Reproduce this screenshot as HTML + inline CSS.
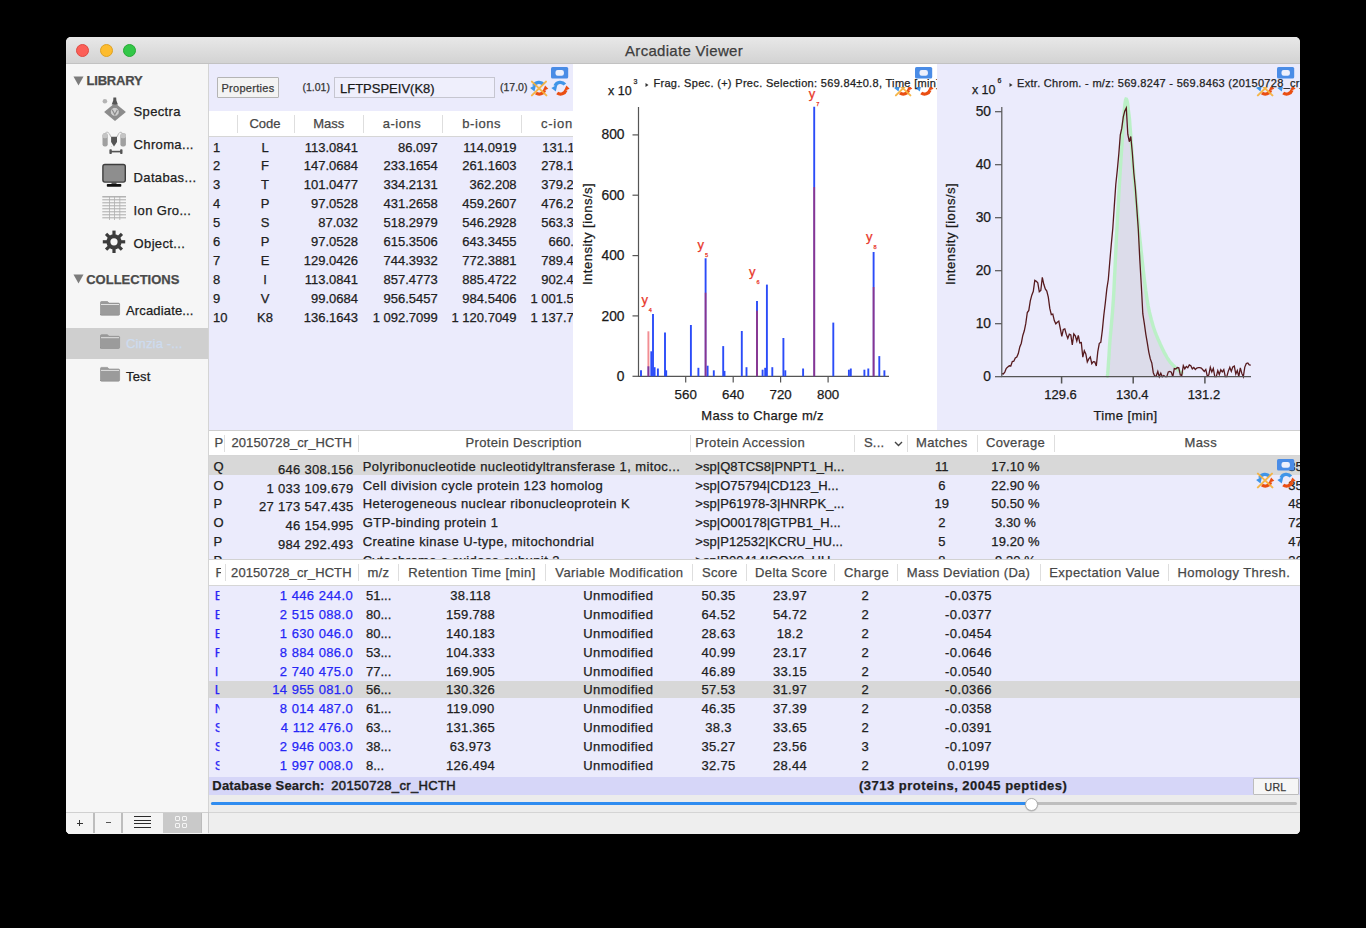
<!DOCTYPE html><html><head><meta charset="utf-8"><style>
*{margin:0;padding:0;box-sizing:border-box}
html,body{width:1366px;height:928px;overflow:hidden;background:#000}
body{position:relative;font-family:"Liberation Sans",sans-serif}
.t{position:absolute;white-space:nowrap;-webkit-text-stroke:0.25px currentColor}
.r{position:absolute}
.cl{position:absolute;left:0;top:0;width:1366px;height:928px}
svg{position:absolute}
</style></head><body>
<div class="r" style="left:66px;top:37px;width:1234px;height:796.6px;background:#ececec;border-radius:5px 5px 4.5px 4.5px;"></div>
<div class="r" style="left:66px;top:37px;width:1234px;height:27px;background:linear-gradient(#e8e8e8,#d3d3d3);border-radius:5px 5px 0 0;border-bottom:1px solid #c2c2c2;"></div>
<div class="r" style="left:76.0px;top:44px;width:13px;height:13px;border-radius:50%;background:#fc5f57;border:0.5px solid #de4a42"></div>
<div class="r" style="left:99.5px;top:44px;width:13px;height:13px;border-radius:50%;background:#fdbc2e;border:0.5px solid #dea123"></div>
<div class="r" style="left:123.0px;top:44px;width:13px;height:13px;border-radius:50%;background:#33c748;border:0.5px solid #27aa35"></div>
<div class="t" style="top:39.70px;font-size:15px;line-height:21px;color:#3d3d3d;letter-spacing:0.3px;left:484.00px;width:400px;text-align:center;">Arcadiate Viewer</div>
<div class="r" style="left:66px;top:64px;width:142px;height:748px;background:#f6f6f6;"></div>
<div class="r" style="left:208px;top:64px;width:1px;height:748px;background:#d4d4d4;"></div>
<svg style="left:73px;top:76px" width="11" height="10"><path d="M0.5 0.5 L10.5 0.5 L5.5 9.5 Z" fill="#7c7c7c"/></svg>
<div class="t" style="top:72.30px;font-size:13px;line-height:18px;color:#4a4a4a;font-weight:700;letter-spacing:-0.2px;left:86.50px;">LIBRARY</div>
<div class="t" style="top:103.00px;font-size:13px;line-height:18px;color:#202020;letter-spacing:0.35px;left:133.60px;">Spectra</div>
<div class="t" style="top:136.00px;font-size:13px;line-height:18px;color:#202020;letter-spacing:0.35px;left:133.60px;">Chroma...</div>
<div class="t" style="top:169.00px;font-size:13px;line-height:18px;color:#202020;letter-spacing:0.35px;left:133.60px;">Databas...</div>
<div class="t" style="top:202.00px;font-size:13px;line-height:18px;color:#202020;letter-spacing:0.35px;left:133.60px;">Ion Gro...</div>
<div class="t" style="top:235.00px;font-size:13px;line-height:18px;color:#202020;letter-spacing:0.35px;left:133.60px;">Object...</div>
<svg style="left:73px;top:274px" width="11" height="10"><path d="M0.5 0.5 L10.5 0.5 L5.5 9.5 Z" fill="#7c7c7c"/></svg>
<div class="t" style="top:270.50px;font-size:13px;line-height:18px;color:#4a4a4a;font-weight:700;left:86.20px;">COLLECTIONS</div>
<div class="r" style="left:66px;top:327.9px;width:142px;height:31.6px;background:#cfcfcf;"></div>
<div class="t" style="top:301.50px;font-size:13px;line-height:18px;color:#202020;letter-spacing:0.15px;left:126.00px;">Arcadiate...</div>
<div class="t" style="top:334.50px;font-size:13px;line-height:18px;color:#cddcf0;letter-spacing:0.15px;left:126.00px;">Cinzia -...</div>
<div class="t" style="top:367.50px;font-size:13px;line-height:18px;color:#202020;letter-spacing:0.15px;left:126.00px;">Test</div>
<svg style="left:0;top:0" width="1366" height="928"><circle cx="104.9" cy="101.2" r="2.3" fill="#b4b4b4"/><path d="M115 103 L125.9 112 L115 120.9 L104.1 112 Z" fill="#8c8c8c"/><circle cx="114.8" cy="111.8" r="4.4" fill="#cfcfcf" stroke="#7a7a7a" stroke-width="0.6"/><path d="M112.2 109.8 L114.8 114.5 L117.4 109.8" stroke="#8c8c8c" stroke-width="1.2" fill="none"/><path d="M113.4 97.4 H116.2 L116.4 100.5 L117.9 104.6 H111.7 L113.2 100.5 Z" fill="#555"/><path d="M104.5 134 Q108 129 111 137 M123 134 Q120 129 117 137" stroke="#aaa" stroke-width="0.8" fill="none"/><rect x="102.5" y="133.3" width="5.2" height="13.1" rx="2.2" fill="#a0a0a0"/><rect x="102.5" y="133.3" width="5.2" height="5" rx="2" fill="#c4c4c4"/><rect x="120.4" y="133.3" width="5.5" height="13.1" rx="2.2" fill="#a0a0a0"/><rect x="120.4" y="133.3" width="5.5" height="5" rx="2" fill="#c4c4c4"/><path d="M111.1 136.8 H117 V142 L114 146.4 L111.1 142 Z" fill="#555"/><path d="M111.5 147 V146.6" stroke="#888" stroke-width="0.6"/><rect x="109.4" y="149.2" width="2.4" height="4.8" rx="0.8" fill="#555"/><rect x="120.1" y="149.2" width="2.4" height="4.8" rx="0.8" fill="#555"/><rect x="111" y="150.8" width="10" height="1.6" fill="#555"/><rect x="102.9" y="164.5" width="22.4" height="17.6" rx="2" fill="#8e8e8e" stroke="#3e3e3e" stroke-width="1.4"/><rect x="111.5" y="182" width="5" height="2.2" fill="#555"/><rect x="106.8" y="184" width="14.5" height="2.8" rx="0.8" fill="#111"/><path d="M102.3 196.8 H126" stroke="#9a9a9a" stroke-width="1.2" opacity="0.9"/><path d="M102.3 199.8 H126" stroke="#9a9a9a" stroke-width="0.9" opacity="0.9"/><path d="M102.3 202.8 H126" stroke="#9a9a9a" stroke-width="0.9" opacity="0.9"/><path d="M102.3 205.8 H126" stroke="#9a9a9a" stroke-width="0.9" opacity="0.9"/><path d="M102.3 208.8 H126" stroke="#9a9a9a" stroke-width="0.9" opacity="0.9"/><path d="M102.3 211.8 H126" stroke="#9a9a9a" stroke-width="0.9" opacity="0.9"/><path d="M102.3 214.8 H126" stroke="#9a9a9a" stroke-width="0.9" opacity="0.9"/><path d="M102.3 217.8 H126" stroke="#9a9a9a" stroke-width="0.9" opacity="0.9"/><path d="M109.5 196.2 V220" stroke="#b0b0b0" stroke-width="0.8"/><path d="M114.5 196.2 V220" stroke="#b0b0b0" stroke-width="0.8"/><path d="M119.8 196.2 V220" stroke="#b0b0b0" stroke-width="0.8"/><path d="M120.00 241.80 L125.20 241.80" stroke="#3c3c3c" stroke-width="3.2" stroke-linecap="butt"/><path d="M118.24 246.04 L121.92 249.72" stroke="#3c3c3c" stroke-width="3.2" stroke-linecap="butt"/><path d="M114.00 247.80 L114.00 253.00" stroke="#3c3c3c" stroke-width="3.2" stroke-linecap="butt"/><path d="M109.76 246.04 L106.08 249.72" stroke="#3c3c3c" stroke-width="3.2" stroke-linecap="butt"/><path d="M108.00 241.80 L102.80 241.80" stroke="#3c3c3c" stroke-width="3.2" stroke-linecap="butt"/><path d="M109.76 237.56 L106.08 233.88" stroke="#3c3c3c" stroke-width="3.2" stroke-linecap="butt"/><path d="M114.00 235.80 L114.00 230.60" stroke="#3c3c3c" stroke-width="3.2" stroke-linecap="butt"/><path d="M118.24 237.56 L121.92 233.88" stroke="#3c3c3c" stroke-width="3.2" stroke-linecap="butt"/><circle cx="114.0" cy="241.8" r="5.6" fill="none" stroke="#3c3c3c" stroke-width="4"/><path d="M100.5 315.1 V302.5 Q100.5 301.5 101.5 301.5 H107.5 L109 303.1 H118.5 Q119.6 303.1 119.6 304.1 V314.1 Q119.6 315.3 118.5 315.3 H101.5 Q100.5 315.3 100.5 314.3 Z" fill="#9b9b9b" stroke="#8a8a8a" stroke-width="0.6"/><path d="M101 304.5 H119" stroke="#e2e2e2" stroke-width="1"/><path d="M100.5 348.3 V335.7 Q100.5 334.7 101.5 334.7 H107.5 L109 336.3 H118.5 Q119.6 336.3 119.6 337.3 V347.3 Q119.6 348.5 118.5 348.5 H101.5 Q100.5 348.5 100.5 347.5 Z" fill="#9b9b9b" stroke="#8a8a8a" stroke-width="0.6"/><path d="M101 337.7 H119" stroke="#e2e2e2" stroke-width="1"/><path d="M100.5 381.0 V368.4 Q100.5 367.4 101.5 367.4 H107.5 L109 369.0 H118.5 Q119.6 369.0 119.6 370.0 V380.0 Q119.6 381.2 118.5 381.2 H101.5 Q100.5 381.2 100.5 380.2 Z" fill="#9b9b9b" stroke="#8a8a8a" stroke-width="0.6"/><path d="M101 370.4 H119" stroke="#e2e2e2" stroke-width="1"/></svg>
<div class="r" style="left:66px;top:811.5px;width:1234px;height:22.1px;background:#eeeeee;border-top:1.2px solid #d4d4d4;border-radius:0 0 4.5px 4.5px;"></div>
<div class="r" style="left:66px;top:811.5px;width:142px;height:22.1px;background:#f4f4f4;border-top:1.2px solid #d0d0d0;border-radius:0 0 0 4.5px;"></div>
<div class="r" style="left:208px;top:812px;width:1px;height:21px;background:#c9c9c9;"></div>
<div class="r" style="left:93.4px;top:813px;width:1.8px;height:20px;background:#bdbdbd;"></div>
<div class="r" style="left:121.4px;top:813px;width:1.8px;height:20px;background:#bdbdbd;"></div>
<div class="r" style="left:162.5px;top:813px;width:38px;height:20px;background:#c9c9c9;"></div>
<div class="r" style="left:200.5px;top:813px;width:1px;height:20px;background:#bcbcbc;"></div>
<div class="r" style="left:76.6px;top:822.6px;width:6px;height:1.3px;background:#333;"></div>
<div class="r" style="left:79px;top:820.1px;width:1.3px;height:6.2px;background:#333;"></div>
<div class="r" style="left:105.8px;top:822.3px;width:5px;height:1.2px;background:#555;"></div>
<div class="r" style="left:133.8px;top:815.8px;width:17px;height:1.3px;background:#2a2a2a;"></div>
<div class="r" style="left:133.8px;top:819.5px;width:17px;height:1.3px;background:#2a2a2a;"></div>
<div class="r" style="left:133.8px;top:823.1px;width:17px;height:1.3px;background:#2a2a2a;"></div>
<div class="r" style="left:133.8px;top:826.8px;width:17px;height:1.3px;background:#2a2a2a;"></div>
<div class="r" style="left:175.4px;top:816.2px;width:4.9px;height:4.9px;border:1px solid #f4f4f4;border-radius:1px"></div>
<div class="r" style="left:175.4px;top:823.2px;width:4.9px;height:4.9px;border:1px solid #f4f4f4;border-radius:1px"></div>
<div class="r" style="left:182.4px;top:816.2px;width:4.9px;height:4.9px;border:1px solid #f4f4f4;border-radius:1px"></div>
<div class="r" style="left:182.4px;top:823.2px;width:4.9px;height:4.9px;border:1px solid #f4f4f4;border-radius:1px"></div>
<div class="r" style="left:209px;top:64px;width:364px;height:366px;background:#ebebfc;"></div>
<div class="r" style="left:217px;top:77px;width:62px;height:21px;background:#f3f3f3;border:1px solid #b4b4b4;border-radius:1px"></div>
<div class="t" style="top:81.09px;font-size:11px;line-height:15px;color:#3a3a3a;letter-spacing:0.3px;left:217.00px;width:62px;text-align:center;">Properties</div>
<div class="t" style="top:80.46px;font-size:10.5px;line-height:15px;color:#333;left:302.50px;">(1.01)</div>
<div class="r" style="left:334px;top:77px;width:161px;height:21px;background:#efeffc;border:1px solid #c6c6d0;"></div>
<div class="t" style="top:79.50px;font-size:13px;line-height:18px;color:#1a1a1a;left:340.00px;">LFTPSPEIV(K8)</div>
<div class="t" style="top:80.46px;font-size:10.5px;line-height:15px;color:#333;left:500.00px;">(17.0)</div>
<svg style="left:528.4px;top:66.7px" width="44" height="32" viewBox="-23 0 44 32"><rect x="0" y="0" width="17.2" height="11.6" rx="1.6" fill="#4a8ce6"/><rect x="4.5" y="2.9" width="8.4" height="5.8" rx="2.2" fill="#eef0fc"/><g transform="translate(-21.3 0)"><path d="M13.9 17.6 A5.8 5.8 0 0 0 4.0 18.8" stroke="#3f95e8" stroke-width="3.3" fill="none"/><path d="M0.4 21.0 L6.4 17.6 L4.8 24.6 Z" fill="#3f95e8"/><path d="M6.2 26.0 A5.8 5.8 0 0 0 15.0 23.2" stroke="#ea4e12" stroke-width="3.3" fill="none"/><path d="M18.6 21.8 L15.4 18.6 L12.8 24.2 Z" fill="#ea4e12"/><path d="M2.2 14.6 L16.7 28.4 M16.3 14.6 L2.2 28.4" stroke="#f6b23c" stroke-width="2" stroke-linecap="round" opacity="0.92"/></g><g transform="translate(0 0)"><path d="M13.9 17.6 A5.8 5.8 0 0 0 4.0 18.8" stroke="#3f95e8" stroke-width="3.3" fill="none"/><path d="M0.4 21.0 L6.4 17.6 L4.8 24.6 Z" fill="#3f95e8"/><path d="M6.2 26.0 A5.8 5.8 0 0 0 15.0 23.2" stroke="#ea4e12" stroke-width="3.3" fill="none"/><path d="M18.6 21.8 L15.4 18.6 L12.8 24.2 Z" fill="#ea4e12"/></g></svg>
<div class="r" style="left:209px;top:111.3px;width:364px;height:25.9px;background:#fff;border-bottom:1px solid #d6d6d6;"></div>
<div class="r" style="left:236.6px;top:115px;width:1px;height:18px;background:#dedede;"></div>
<div class="r" style="left:293.5px;top:115px;width:1px;height:18px;background:#dedede;"></div>
<div class="r" style="left:362.5px;top:115px;width:1px;height:18px;background:#dedede;"></div>
<div class="r" style="left:441.6px;top:115px;width:1px;height:18px;background:#dedede;"></div>
<div class="r" style="left:520.6px;top:115px;width:1px;height:18px;background:#dedede;"></div>
<div class="t" style="top:114.80px;font-size:13px;line-height:18px;color:#474747;left:235.00px;width:60px;text-align:center;">Code</div>
<div class="t" style="top:114.80px;font-size:13px;line-height:18px;color:#474747;left:298.80px;width:60px;text-align:center;">Mass</div>
<div class="t" style="top:114.80px;font-size:13px;line-height:18px;color:#474747;letter-spacing:0.55px;left:367.00px;width:70px;text-align:center;">a-ions</div>
<div class="t" style="top:114.80px;font-size:13px;line-height:18px;color:#474747;letter-spacing:0.55px;left:446.70px;width:70px;text-align:center;">b-ions</div>
<div class="cl" style="clip-path:inset(111px 793px 791px 209px)">
<div class="t" style="top:114.80px;font-size:13px;line-height:18px;color:#474747;letter-spacing:0.75px;left:541.00px;">c-ions</div>
</div>
<div class="cl" style="clip-path:inset(137px 793px 498px 209px)">
<div class="t" style="top:138.50px;font-size:13px;line-height:18px;color:#202020;left:213.00px;">1</div>
<div class="t" style="top:138.50px;font-size:13px;line-height:18px;color:#202020;left:245.00px;width:40px;text-align:center;">L</div>
<div class="t" style="top:138.50px;font-size:13px;line-height:18px;color:#202020;left:258.00px;width:100px;text-align:right;">113.0841</div>
<div class="t" style="top:138.50px;font-size:13px;line-height:18px;color:#202020;left:337.80px;width:100px;text-align:right;">86.097</div>
<div class="t" style="top:138.50px;font-size:13px;line-height:18px;color:#202020;left:416.60px;width:100px;text-align:right;">114.0919</div>
<div class="t" style="top:138.50px;font-size:13px;line-height:18px;color:#202020;left:495.50px;width:100px;text-align:right;">131.1184</div>
<div class="t" style="top:157.40px;font-size:13px;line-height:18px;color:#202020;left:213.00px;">2</div>
<div class="t" style="top:157.40px;font-size:13px;line-height:18px;color:#202020;left:245.00px;width:40px;text-align:center;">F</div>
<div class="t" style="top:157.40px;font-size:13px;line-height:18px;color:#202020;left:258.00px;width:100px;text-align:right;">147.0684</div>
<div class="t" style="top:157.40px;font-size:13px;line-height:18px;color:#202020;left:337.80px;width:100px;text-align:right;">233.1654</div>
<div class="t" style="top:157.40px;font-size:13px;line-height:18px;color:#202020;left:416.60px;width:100px;text-align:right;">261.1603</div>
<div class="t" style="top:157.40px;font-size:13px;line-height:18px;color:#202020;left:495.50px;width:100px;text-align:right;">278.1868</div>
<div class="t" style="top:176.30px;font-size:13px;line-height:18px;color:#202020;left:213.00px;">3</div>
<div class="t" style="top:176.30px;font-size:13px;line-height:18px;color:#202020;left:245.00px;width:40px;text-align:center;">T</div>
<div class="t" style="top:176.30px;font-size:13px;line-height:18px;color:#202020;left:258.00px;width:100px;text-align:right;">101.0477</div>
<div class="t" style="top:176.30px;font-size:13px;line-height:18px;color:#202020;left:337.80px;width:100px;text-align:right;">334.2131</div>
<div class="t" style="top:176.30px;font-size:13px;line-height:18px;color:#202020;left:416.60px;width:100px;text-align:right;">362.208</div>
<div class="t" style="top:176.30px;font-size:13px;line-height:18px;color:#202020;left:495.50px;width:100px;text-align:right;">379.2345</div>
<div class="t" style="top:195.20px;font-size:13px;line-height:18px;color:#202020;left:213.00px;">4</div>
<div class="t" style="top:195.20px;font-size:13px;line-height:18px;color:#202020;left:245.00px;width:40px;text-align:center;">P</div>
<div class="t" style="top:195.20px;font-size:13px;line-height:18px;color:#202020;left:258.00px;width:100px;text-align:right;">97.0528</div>
<div class="t" style="top:195.20px;font-size:13px;line-height:18px;color:#202020;left:337.80px;width:100px;text-align:right;">431.2658</div>
<div class="t" style="top:195.20px;font-size:13px;line-height:18px;color:#202020;left:416.60px;width:100px;text-align:right;">459.2607</div>
<div class="t" style="top:195.20px;font-size:13px;line-height:18px;color:#202020;left:495.50px;width:100px;text-align:right;">476.2872</div>
<div class="t" style="top:214.10px;font-size:13px;line-height:18px;color:#202020;left:213.00px;">5</div>
<div class="t" style="top:214.10px;font-size:13px;line-height:18px;color:#202020;left:245.00px;width:40px;text-align:center;">S</div>
<div class="t" style="top:214.10px;font-size:13px;line-height:18px;color:#202020;left:258.00px;width:100px;text-align:right;">87.032</div>
<div class="t" style="top:214.10px;font-size:13px;line-height:18px;color:#202020;left:337.80px;width:100px;text-align:right;">518.2979</div>
<div class="t" style="top:214.10px;font-size:13px;line-height:18px;color:#202020;left:416.60px;width:100px;text-align:right;">546.2928</div>
<div class="t" style="top:214.10px;font-size:13px;line-height:18px;color:#202020;left:495.50px;width:100px;text-align:right;">563.3193</div>
<div class="t" style="top:233.00px;font-size:13px;line-height:18px;color:#202020;left:213.00px;">6</div>
<div class="t" style="top:233.00px;font-size:13px;line-height:18px;color:#202020;left:245.00px;width:40px;text-align:center;">P</div>
<div class="t" style="top:233.00px;font-size:13px;line-height:18px;color:#202020;left:258.00px;width:100px;text-align:right;">97.0528</div>
<div class="t" style="top:233.00px;font-size:13px;line-height:18px;color:#202020;left:337.80px;width:100px;text-align:right;">615.3506</div>
<div class="t" style="top:233.00px;font-size:13px;line-height:18px;color:#202020;left:416.60px;width:100px;text-align:right;">643.3455</div>
<div class="t" style="top:233.00px;font-size:13px;line-height:18px;color:#202020;left:495.50px;width:100px;text-align:right;">660.372</div>
<div class="t" style="top:251.90px;font-size:13px;line-height:18px;color:#202020;left:213.00px;">7</div>
<div class="t" style="top:251.90px;font-size:13px;line-height:18px;color:#202020;left:245.00px;width:40px;text-align:center;">E</div>
<div class="t" style="top:251.90px;font-size:13px;line-height:18px;color:#202020;left:258.00px;width:100px;text-align:right;">129.0426</div>
<div class="t" style="top:251.90px;font-size:13px;line-height:18px;color:#202020;left:337.80px;width:100px;text-align:right;">744.3932</div>
<div class="t" style="top:251.90px;font-size:13px;line-height:18px;color:#202020;left:416.60px;width:100px;text-align:right;">772.3881</div>
<div class="t" style="top:251.90px;font-size:13px;line-height:18px;color:#202020;left:495.50px;width:100px;text-align:right;">789.4146</div>
<div class="t" style="top:270.80px;font-size:13px;line-height:18px;color:#202020;left:213.00px;">8</div>
<div class="t" style="top:270.80px;font-size:13px;line-height:18px;color:#202020;left:245.00px;width:40px;text-align:center;">I</div>
<div class="t" style="top:270.80px;font-size:13px;line-height:18px;color:#202020;left:258.00px;width:100px;text-align:right;">113.0841</div>
<div class="t" style="top:270.80px;font-size:13px;line-height:18px;color:#202020;left:337.80px;width:100px;text-align:right;">857.4773</div>
<div class="t" style="top:270.80px;font-size:13px;line-height:18px;color:#202020;left:416.60px;width:100px;text-align:right;">885.4722</div>
<div class="t" style="top:270.80px;font-size:13px;line-height:18px;color:#202020;left:495.50px;width:100px;text-align:right;">902.4987</div>
<div class="t" style="top:289.70px;font-size:13px;line-height:18px;color:#202020;left:213.00px;">9</div>
<div class="t" style="top:289.70px;font-size:13px;line-height:18px;color:#202020;left:245.00px;width:40px;text-align:center;">V</div>
<div class="t" style="top:289.70px;font-size:13px;line-height:18px;color:#202020;left:258.00px;width:100px;text-align:right;">99.0684</div>
<div class="t" style="top:289.70px;font-size:13px;line-height:18px;color:#202020;left:337.80px;width:100px;text-align:right;">956.5457</div>
<div class="t" style="top:289.70px;font-size:13px;line-height:18px;color:#202020;left:416.60px;width:100px;text-align:right;">984.5406</div>
<div class="t" style="top:289.70px;font-size:13px;line-height:18px;color:#202020;left:495.50px;width:100px;text-align:right;">1 001.5671</div>
<div class="t" style="top:308.60px;font-size:13px;line-height:18px;color:#202020;left:213.00px;">10</div>
<div class="t" style="top:308.60px;font-size:13px;line-height:18px;color:#202020;left:245.00px;width:40px;text-align:center;">K8</div>
<div class="t" style="top:308.60px;font-size:13px;line-height:18px;color:#202020;left:258.00px;width:100px;text-align:right;">136.1643</div>
<div class="t" style="top:308.60px;font-size:13px;line-height:18px;color:#202020;left:337.80px;width:100px;text-align:right;">1 092.7099</div>
<div class="t" style="top:308.60px;font-size:13px;line-height:18px;color:#202020;left:416.60px;width:100px;text-align:right;">1 120.7049</div>
<div class="t" style="top:308.60px;font-size:13px;line-height:18px;color:#202020;left:495.50px;width:100px;text-align:right;">1 137.7314</div>
</div>
<div class="r" style="left:573px;top:64px;width:364px;height:366px;background:#fff;"></div>
<div class="cl" style="clip-path:inset(64px 429px 498px 573px)">
<div class="t" style="top:81.77px;font-size:12.5px;line-height:18px;color:#1a1a1a;left:608.00px;">x 10</div>
<div class="t" style="top:76.57px;font-size:7px;line-height:10px;color:#1a1a1a;left:633.40px;">3</div>
<svg style="left:0;top:0" width="1366" height="928"><path d="M638.5 107 V376.3 H889" stroke="#555" stroke-width="1.2" fill="none"/><path d="M632.5 376.3 H638.5" stroke="#555" stroke-width="1.2"/><path d="M632.5 315.9 H638.5" stroke="#555" stroke-width="1.2"/><path d="M632.5 255.6 H638.5" stroke="#555" stroke-width="1.2"/><path d="M632.5 195.2 H638.5" stroke="#555" stroke-width="1.2"/><path d="M632.5 134.9 H638.5" stroke="#555" stroke-width="1.2"/><path d="M685.7 376.3 V382.5" stroke="#555" stroke-width="1.2"/><path d="M733.2 376.3 V382.5" stroke="#555" stroke-width="1.2"/><path d="M780.6 376.3 V382.5" stroke="#555" stroke-width="1.2"/><path d="M828.1 376.3 V382.5" stroke="#555" stroke-width="1.2"/><path d="M641.0 376.3 V370.3" stroke="#2b4cf8" stroke-width="1.9"/><path d="M648.4 376.3 V366.3" stroke="#2b4cf8" stroke-width="1.9"/><path d="M651.3 376.3 V351.3" stroke="#2b4cf8" stroke-width="1.9"/><path d="M653.0 376.3 V314.1" stroke="#2b4cf8" stroke-width="1.9"/><path d="M654.6 376.3 V367.2" stroke="#2b4cf8" stroke-width="1.9"/><path d="M657.9 376.3 V368.5" stroke="#2b4cf8" stroke-width="1.9"/><path d="M665.0 376.3 V332.5" stroke="#2b4cf8" stroke-width="1.9"/><path d="M666.2 376.3 V370.3" stroke="#2b4cf8" stroke-width="1.9"/><path d="M690.9 376.3 V325.0" stroke="#2b4cf8" stroke-width="1.9"/><path d="M698.4 376.3 V367.8" stroke="#2b4cf8" stroke-width="1.9"/><path d="M705.6 376.3 V258.3" stroke="#2b4cf8" stroke-width="1.9"/><path d="M707.6 376.3 V365.7" stroke="#2b4cf8" stroke-width="1.9"/><path d="M713.8 376.3 V370.3" stroke="#2b4cf8" stroke-width="1.9"/><path d="M723.2 376.3 V346.1" stroke="#2b4cf8" stroke-width="1.9"/><path d="M724.5 376.3 V370.9" stroke="#2b4cf8" stroke-width="1.9"/><path d="M741.8 376.3 V331.0" stroke="#2b4cf8" stroke-width="1.9"/><path d="M746.5 376.3 V367.2" stroke="#2b4cf8" stroke-width="1.9"/><path d="M757.0 376.3 V300.9" stroke="#2b4cf8" stroke-width="1.9"/><path d="M762.6 376.3 V369.7" stroke="#2b4cf8" stroke-width="1.9"/><path d="M765.2 376.3 V367.8" stroke="#2b4cf8" stroke-width="1.9"/><path d="M766.9 376.3 V284.6" stroke="#2b4cf8" stroke-width="1.9"/><path d="M772.3 376.3 V367.2" stroke="#2b4cf8" stroke-width="1.9"/><path d="M783.4 376.3 V338.0" stroke="#2b4cf8" stroke-width="1.9"/><path d="M785.3 376.3 V370.3" stroke="#2b4cf8" stroke-width="1.9"/><path d="M803.1 376.3 V368.5" stroke="#2b4cf8" stroke-width="1.9"/><path d="M814.2 376.3 V106.8" stroke="#2b4cf8" stroke-width="1.9"/><path d="M833.3 376.3 V322.6" stroke="#2b4cf8" stroke-width="1.9"/><path d="M848.9 376.3 V369.7" stroke="#2b4cf8" stroke-width="1.9"/><path d="M850.8 376.3 V368.5" stroke="#2b4cf8" stroke-width="1.9"/><path d="M864.4 376.3 V369.7" stroke="#2b4cf8" stroke-width="1.9"/><path d="M868.3 376.3 V368.5" stroke="#2b4cf8" stroke-width="1.9"/><path d="M873.6 376.3 V252.0" stroke="#2b4cf8" stroke-width="1.9"/><path d="M879.3 376.3 V356.1" stroke="#2b4cf8" stroke-width="1.9"/><path d="M884.4 376.3 V370.3" stroke="#2b4cf8" stroke-width="1.9"/><path d="M648.4 376.3 V331.3" stroke="rgba(230,30,40,0.5)" stroke-width="1.9"/><path d="M705.6 376.3 V292.7" stroke="rgba(230,30,40,0.5)" stroke-width="1.9"/><path d="M757.0 376.3 V310.8" stroke="rgba(230,30,40,0.5)" stroke-width="1.9"/><path d="M814.2 376.3 V187.1" stroke="rgba(230,30,40,0.5)" stroke-width="1.9"/><path d="M873.6 376.3 V287.0" stroke="rgba(230,30,40,0.5)" stroke-width="1.9"/></svg>
<div class="t" style="top:290.80px;font-size:13px;line-height:18px;color:#e8382a;left:641.40px;">y</div>
<div class="t" style="top:305.66px;font-size:5.6px;line-height:8px;color:#e8382a;left:648.80px;">4</div>
<div class="t" style="top:235.80px;font-size:13px;line-height:18px;color:#e8382a;left:697.60px;">y</div>
<div class="t" style="top:250.66px;font-size:5.6px;line-height:8px;color:#e8382a;left:705.00px;">5</div>
<div class="t" style="top:262.80px;font-size:13px;line-height:18px;color:#e8382a;left:749.00px;">y</div>
<div class="t" style="top:277.66px;font-size:5.6px;line-height:8px;color:#e8382a;left:756.40px;">6</div>
<div class="t" style="top:84.90px;font-size:13px;line-height:18px;color:#e8382a;left:808.80px;">y</div>
<div class="t" style="top:99.76px;font-size:5.6px;line-height:8px;color:#e8382a;left:816.20px;">7</div>
<div class="t" style="top:227.90px;font-size:13px;line-height:18px;color:#e8382a;left:866.00px;">y</div>
<div class="t" style="top:242.76px;font-size:5.6px;line-height:8px;color:#e8382a;left:873.40px;">8</div>
<div class="t" style="top:366.92px;font-size:13.8px;line-height:19px;color:#1a1a1a;left:564.50px;width:60px;text-align:right;">0</div>
<div class="t" style="top:306.56px;font-size:13.8px;line-height:19px;color:#1a1a1a;left:564.50px;width:60px;text-align:right;">200</div>
<div class="t" style="top:246.20px;font-size:13.8px;line-height:19px;color:#1a1a1a;left:564.50px;width:60px;text-align:right;">400</div>
<div class="t" style="top:185.84px;font-size:13.8px;line-height:19px;color:#1a1a1a;left:564.50px;width:60px;text-align:right;">600</div>
<div class="t" style="top:125.48px;font-size:13.8px;line-height:19px;color:#1a1a1a;left:564.50px;width:60px;text-align:right;">800</div>
<div class="t" style="top:384.89px;font-size:13.3px;line-height:19px;color:#1a1a1a;left:655.70px;width:60px;text-align:center;">560</div>
<div class="t" style="top:384.89px;font-size:13.3px;line-height:19px;color:#1a1a1a;left:703.17px;width:60px;text-align:center;">640</div>
<div class="t" style="top:384.89px;font-size:13.3px;line-height:19px;color:#1a1a1a;left:750.64px;width:60px;text-align:center;">720</div>
<div class="t" style="top:384.89px;font-size:13.3px;line-height:19px;color:#1a1a1a;left:798.11px;width:60px;text-align:center;">800</div>
<div class="t" style="top:406.70px;font-size:13px;line-height:18px;color:#1a1a1a;letter-spacing:0.35px;left:662.60px;width:200px;text-align:center;">Mass to Charge m/z</div>
<div class="t" style="left:538px;top:226px;width:100px;height:18px;line-height:18px;font-size:13px;color:#1a1a1a;text-align:center;transform:rotate(-90deg);letter-spacing:0.5px">Intensity [ions/s]</div>
<svg style="left:891.7px;top:66.8px" width="44" height="32" viewBox="-23 0 44 32"><rect x="0" y="0" width="17.2" height="11.6" rx="1.6" fill="#4a8ce6"/><rect x="4.5" y="2.9" width="8.4" height="5.8" rx="2.2" fill="#eef0fc"/><g transform="translate(-21.3 0)"><path d="M13.9 17.6 A5.8 5.8 0 0 0 4.0 18.8" stroke="#3f95e8" stroke-width="3.3" fill="none"/><path d="M0.4 21.0 L6.4 17.6 L4.8 24.6 Z" fill="#3f95e8"/><path d="M6.2 26.0 A5.8 5.8 0 0 0 15.0 23.2" stroke="#ea4e12" stroke-width="3.3" fill="none"/><path d="M18.6 21.8 L15.4 18.6 L12.8 24.2 Z" fill="#ea4e12"/><path d="M2.2 14.6 L16.7 28.4 M16.3 14.6 L2.2 28.4" stroke="#f6b23c" stroke-width="2" stroke-linecap="round" opacity="0.92"/></g><g transform="translate(0 0)"><path d="M13.9 17.6 A5.8 5.8 0 0 0 4.0 18.8" stroke="#3f95e8" stroke-width="3.3" fill="none"/><path d="M0.4 21.0 L6.4 17.6 L4.8 24.6 Z" fill="#3f95e8"/><path d="M6.2 26.0 A5.8 5.8 0 0 0 15.0 23.2" stroke="#ea4e12" stroke-width="3.3" fill="none"/><path d="M18.6 21.8 L15.4 18.6 L12.8 24.2 Z" fill="#ea4e12"/></g></svg>
<div class="r" style="left:643px;top:78.6px;width:294px;height:8.2px;background:#fff;"></div>
<svg style="left:645px;top:82.5px" width="4" height="4"><path d="M0.5 0 L3.5 2 L0.5 4 Z" fill="#333"/></svg>
<div class="t" style="top:75.69px;font-size:11px;line-height:15px;color:#222;letter-spacing:0.32px;left:653.40px;">Frag. Spec. (+) Prec. Selection: 569.84&#177;0.8, Time [min]: 130.33</div>
</div>
<div class="r" style="left:937px;top:64px;width:363px;height:366px;background:#ebebfc;"></div>
<div class="cl" style="clip-path:inset(64px 66px 498px 937px)">
<div class="t" style="top:80.67px;font-size:12.5px;line-height:18px;color:#1a1a1a;left:971.90px;">x 10</div>
<div class="t" style="top:75.57px;font-size:7px;line-height:10px;color:#1a1a1a;left:997.50px;">6</div>
<svg style="left:0;top:0" width="1366" height="928"><path d="M1107.4 376.2 L1107.7 373.4 L1108.0 369.8 L1108.3 365.5 L1108.6 360.6 L1109.0 355.5 L1109.3 350.2 L1109.6 345.0 L1110.0 340.0 L1110.4 335.4 L1110.8 331.0 L1111.2 326.7 L1111.6 322.2 L1112.0 317.4 L1112.5 312.1 L1112.9 306.0 L1113.4 299.0 L1113.9 290.9 L1114.3 281.8 L1114.8 272.0 L1115.3 261.7 L1115.8 251.0 L1116.3 240.3 L1116.9 229.7 L1117.4 219.5 L1118.0 209.3 L1118.6 198.7 L1119.2 188.0 L1119.8 177.3 L1120.5 166.9 L1121.1 157.1 L1121.7 148.0 L1122.2 140.0 L1122.7 132.7 L1123.1 125.9 L1123.6 119.7 L1124.0 114.1 L1124.4 109.2 L1124.8 105.2 L1125.2 102.1 L1125.6 100.0 L1126.0 99.0 L1126.4 99.1 L1126.8 100.1 L1127.3 101.9 L1127.7 104.4 L1128.1 107.5 L1128.5 111.1 L1129.0 115.0 L1129.5 119.5 L1129.9 124.9 L1130.4 131.0 L1130.9 137.5 L1131.4 144.4 L1131.9 151.4 L1132.4 158.3 L1133.0 165.0 L1133.6 171.7 L1134.2 178.7 L1134.8 185.8 L1135.5 192.9 L1136.2 200.0 L1136.8 206.8 L1137.4 213.4 L1138.0 219.5 L1138.5 225.2 L1139.0 230.4 L1139.5 235.4 L1140.0 240.2 L1140.5 244.8 L1141.0 249.4 L1141.5 254.1 L1142.0 259.0 L1142.6 264.1 L1143.2 269.4 L1143.8 274.7 L1144.4 280.0 L1145.1 285.2 L1145.7 290.2 L1146.4 294.8 L1147.0 299.0 L1147.6 302.7 L1148.2 306.1 L1148.8 309.1 L1149.4 311.9 L1150.1 314.6 L1150.7 317.1 L1151.3 319.5 L1152.0 322.0 L1152.7 324.4 L1153.3 326.6 L1154.0 328.7 L1154.7 330.7 L1155.4 332.7 L1156.2 334.7 L1157.1 336.8 L1158.0 339.0 L1159.1 341.4 L1160.2 344.0 L1161.5 346.7 L1162.8 349.4 L1164.1 352.1 L1165.5 354.6 L1166.8 357.0 L1168.0 359.0 L1169.2 360.8 L1170.4 362.3 L1171.6 363.7 L1172.8 365.0 L1174.0 366.1 L1175.1 367.2 L1176.1 368.1 L1177.0 369.0 L1177.8 369.8 L1178.6 370.5 L1179.3 371.1 L1179.9 371.6 L1180.4 372.0 L1181.0 372.4 L1181.5 372.7 L1182.0 373.0 L1182.0 376.7 L1107.4 376.7 Z" fill="#dcdcea"/><path d="M1107.4 376.2 L1107.7 373.4 L1108.0 369.8 L1108.3 365.5 L1108.6 360.6 L1109.0 355.5 L1109.3 350.2 L1109.6 345.0 L1110.0 340.0 L1110.4 335.4 L1110.8 331.0 L1111.2 326.7 L1111.6 322.2 L1112.0 317.4 L1112.5 312.1 L1112.9 306.0 L1113.4 299.0 L1113.9 290.9 L1114.3 281.8 L1114.8 272.0 L1115.3 261.7 L1115.8 251.0 L1116.3 240.3 L1116.9 229.7 L1117.4 219.5 L1118.0 209.3 L1118.6 198.7 L1119.2 188.0 L1119.8 177.3 L1120.5 166.9 L1121.1 157.1 L1121.7 148.0 L1122.2 140.0 L1122.7 132.7 L1123.1 125.9 L1123.6 119.7 L1124.0 114.1 L1124.4 109.2 L1124.8 105.2 L1125.2 102.1 L1125.6 100.0 L1126.0 99.0 L1126.4 99.1 L1126.8 100.1 L1127.3 101.9 L1127.7 104.4 L1128.1 107.5 L1128.5 111.1 L1129.0 115.0 L1129.5 119.5 L1129.9 124.9 L1130.4 131.0 L1130.9 137.5 L1131.4 144.4 L1131.9 151.4 L1132.4 158.3 L1133.0 165.0 L1133.6 171.7 L1134.2 178.7 L1134.8 185.8 L1135.5 192.9 L1136.2 200.0 L1136.8 206.8 L1137.4 213.4 L1138.0 219.5 L1138.5 225.2 L1139.0 230.4 L1139.5 235.4 L1140.0 240.2 L1140.5 244.8 L1141.0 249.4 L1141.5 254.1 L1142.0 259.0 L1142.6 264.1 L1143.2 269.4 L1143.8 274.7 L1144.4 280.0 L1145.1 285.2 L1145.7 290.2 L1146.4 294.8 L1147.0 299.0 L1147.6 302.7 L1148.2 306.1 L1148.8 309.1 L1149.4 311.9 L1150.1 314.6 L1150.7 317.1 L1151.3 319.5 L1152.0 322.0 L1152.7 324.4 L1153.3 326.6 L1154.0 328.7 L1154.7 330.7 L1155.4 332.7 L1156.2 334.7 L1157.1 336.8 L1158.0 339.0 L1159.1 341.4 L1160.2 344.0 L1161.5 346.7 L1162.8 349.4 L1164.1 352.1 L1165.5 354.6 L1166.8 357.0 L1168.0 359.0 L1169.2 360.8 L1170.4 362.3 L1171.6 363.7 L1172.8 365.0 L1174.0 366.1 L1175.1 367.2 L1176.1 368.1 L1177.0 369.0 L1177.8 369.8 L1178.6 370.5 L1179.3 371.1 L1179.9 371.6 L1180.4 372.0 L1181.0 372.4 L1181.5 372.7 L1182.0 373.0" stroke="#b8f0c4" stroke-width="3.4" fill="none" stroke-linecap="round" opacity="0.95"/><path d="M1001.8 373.6 L1003.3 374.0 L1004.8 372.1 L1006.3 368.3 L1007.8 366.9 L1009.3 365.8 L1010.8 366.0 L1012.3 361.5 L1013.8 361.2 L1015.3 358.0 L1016.8 357.1 L1018.3 353.6 L1019.8 346.9 L1021.3 343.2 L1022.8 335.5 L1024.3 330.8 L1025.8 323.4 L1027.3 312.5 L1028.8 310.4 L1030.3 300.8 L1031.8 295.2 L1033.3 291.3 L1034.8 280.3 L1036.3 281.2 L1037.8 282.8 L1039.3 291.8 L1040.8 290.5 L1042.3 277.3 L1043.8 284.3 L1045.3 288.9 L1046.8 291.1 L1048.3 297.1 L1049.8 308.4 L1051.3 314.6 L1052.8 314.1 L1054.3 320.6 L1055.8 323.8 L1057.3 322.2 L1058.8 321.1 L1060.3 328.5 L1061.8 336.4 L1063.3 329.5 L1064.8 328.9 L1066.3 334.4 L1067.8 338.4 L1069.3 334.2 L1070.8 334.9 L1072.3 344.9 L1073.8 333.9 L1075.3 335.9 L1076.8 341.0 L1078.3 335.4 L1079.8 343.0 L1081.3 342.6 L1082.8 357.2 L1084.3 350.7 L1085.8 353.9 L1087.3 361.9 L1088.8 358.9 L1090.3 356.9 L1091.8 363.7 L1093.3 361.7 L1094.8 361.9 L1096.3 365.9 L1097.8 351.6 L1099.3 343.3 L1100.8 342.4 L1102.3 330.6 L1103.8 315.4 L1105.3 303.0 L1106.8 289.2 L1108.3 279.5 L1109.8 261.5 L1111.3 244.2 L1112.8 228.3 L1114.3 206.1 L1115.8 184.2 L1117.3 170.1 L1118.8 154.0 L1120.3 134.9 L1121.8 128.2 L1123.3 116.9 L1124.8 110.9 L1126.3 108.0 L1127.8 134.2 L1129.3 141.7 L1130.8 136.5 L1132.3 152.5 L1133.8 172.7 L1135.3 187.5 L1136.8 208.1 L1138.3 229.2 L1139.8 259.5 L1141.3 285.3 L1142.8 313.7 L1144.3 323.3 L1145.8 334.1 L1147.3 342.8 L1148.8 352.1 L1150.3 358.9 L1151.8 362.9 L1153.3 372.7 L1154.8 376.2 L1156.3 375.8 L1157.8 371.5 L1159.3 376.7 L1160.8 373.2 L1162.3 376.7 L1163.8 375.5 L1165.3 376.7 L1166.8 376.7 L1168.3 371.9 L1169.8 371.4 L1171.3 372.1 L1172.8 376.7 L1174.3 368.6 L1175.8 369.0 L1177.3 367.5 L1178.8 367.9 L1180.3 375.0 L1181.8 375.4 L1183.3 365.7 L1184.8 368.9 L1186.3 366.4 L1187.8 367.7 L1189.3 364.9 L1190.8 365.7 L1192.3 368.8 L1193.8 367.4 L1195.3 369.5 L1196.8 368.0 L1198.3 367.7 L1199.8 367.6 L1201.3 368.1 L1202.8 369.7 L1204.3 371.4 L1205.8 369.4 L1207.3 376.2 L1208.8 374.9 L1210.3 367.3 L1211.8 371.9 L1213.3 368.4 L1214.8 376.7 L1216.3 376.7 L1217.8 370.7 L1219.3 374.5 L1220.8 369.8 L1222.3 371.9 L1223.8 369.6 L1225.3 376.7 L1226.8 376.7 L1228.3 371.1 L1229.8 367.4 L1231.3 371.4 L1232.8 366.9 L1234.3 366.1 L1235.8 374.1 L1237.3 370.6 L1238.8 376.7 L1240.3 367.9 L1241.8 373.4 L1243.3 376.7 L1244.8 367.1 L1246.3 363.5 L1247.8 363.0 L1249.3 365.0 L1250.8 365.2" stroke="#561a1e" stroke-width="1.3" fill="none"/><path d="M1001.8 107 V376.7 H1251" stroke="#555" stroke-width="1.2" fill="none"/><path d="M995 376.7 H1001.8" stroke="#555" stroke-width="1.2"/><path d="M995 323.7 H1001.8" stroke="#555" stroke-width="1.2"/><path d="M995 270.7 H1001.8" stroke="#555" stroke-width="1.2"/><path d="M995 217.7 H1001.8" stroke="#555" stroke-width="1.2"/><path d="M995 164.7 H1001.8" stroke="#555" stroke-width="1.2"/><path d="M995 111.7 H1001.8" stroke="#555" stroke-width="1.2"/><path d="M1061.6 376.7 V383.5" stroke="#555" stroke-width="1.5"/><path d="M1133.2 376.7 V383.5" stroke="#555" stroke-width="1.5"/><path d="M1204.9 376.7 V383.5" stroke="#555" stroke-width="1.5"/></svg>
<div class="t" style="top:367.32px;font-size:13.8px;line-height:19px;color:#1a1a1a;left:931.00px;width:60px;text-align:right;">0</div>
<div class="t" style="top:314.32px;font-size:13.8px;line-height:19px;color:#1a1a1a;left:931.00px;width:60px;text-align:right;">10</div>
<div class="t" style="top:261.32px;font-size:13.8px;line-height:19px;color:#1a1a1a;left:931.00px;width:60px;text-align:right;">20</div>
<div class="t" style="top:208.32px;font-size:13.8px;line-height:19px;color:#1a1a1a;left:931.00px;width:60px;text-align:right;">30</div>
<div class="t" style="top:155.32px;font-size:13.8px;line-height:19px;color:#1a1a1a;left:931.00px;width:60px;text-align:right;">40</div>
<div class="t" style="top:102.32px;font-size:13.8px;line-height:19px;color:#1a1a1a;left:931.00px;width:60px;text-align:right;">50</div>
<div class="t" style="top:385.50px;font-size:13px;line-height:18px;color:#1a1a1a;left:1030.56px;width:60px;text-align:center;">129.6</div>
<div class="t" style="top:385.50px;font-size:13px;line-height:18px;color:#1a1a1a;left:1102.24px;width:60px;text-align:center;">130.4</div>
<div class="t" style="top:385.50px;font-size:13px;line-height:18px;color:#1a1a1a;left:1173.92px;width:60px;text-align:center;">131.2</div>
<div class="t" style="top:406.90px;font-size:13px;line-height:18px;color:#1a1a1a;letter-spacing:0.4px;left:1025.50px;width:200px;text-align:center;">Time [min]</div>
<div class="t" style="left:901px;top:226px;width:100px;height:18px;line-height:18px;font-size:13px;color:#1a1a1a;text-align:center;transform:rotate(-90deg);letter-spacing:0.5px">Intensity [ions/s]</div>
<svg style="left:1254.2px;top:66.7px" width="44" height="32" viewBox="-23 0 44 32"><rect x="0" y="0" width="17.2" height="11.6" rx="1.6" fill="#4a8ce6"/><rect x="4.5" y="2.9" width="8.4" height="5.8" rx="2.2" fill="#eef0fc"/><g transform="translate(-21.3 0)"><path d="M13.9 17.6 A5.8 5.8 0 0 0 4.0 18.8" stroke="#3f95e8" stroke-width="3.3" fill="none"/><path d="M0.4 21.0 L6.4 17.6 L4.8 24.6 Z" fill="#3f95e8"/><path d="M6.2 26.0 A5.8 5.8 0 0 0 15.0 23.2" stroke="#ea4e12" stroke-width="3.3" fill="none"/><path d="M18.6 21.8 L15.4 18.6 L12.8 24.2 Z" fill="#ea4e12"/><path d="M2.2 14.6 L16.7 28.4 M16.3 14.6 L2.2 28.4" stroke="#f6b23c" stroke-width="2" stroke-linecap="round" opacity="0.92"/></g><g transform="translate(0 0)"><path d="M13.9 17.6 A5.8 5.8 0 0 0 4.0 18.8" stroke="#3f95e8" stroke-width="3.3" fill="none"/><path d="M0.4 21.0 L6.4 17.6 L4.8 24.6 Z" fill="#3f95e8"/><path d="M6.2 26.0 A5.8 5.8 0 0 0 15.0 23.2" stroke="#ea4e12" stroke-width="3.3" fill="none"/><path d="M18.6 21.8 L15.4 18.6 L12.8 24.2 Z" fill="#ea4e12"/></g></svg>
<div class="r" style="left:1007px;top:78.6px;width:293px;height:8.2px;background:#ebebfc;"></div>
<svg style="left:1009px;top:82.5px" width="4" height="4"><path d="M0.5 0 L3.5 2 L0.5 4 Z" fill="#333"/></svg>
<div class="t" style="top:75.69px;font-size:11px;line-height:15px;color:#222;letter-spacing:0.3px;left:1017.00px;">Extr. Chrom. - m/z: 569.8247 - 569.8463 (20150728_cr_HCTH)</div>
</div>
<div class="r" style="left:209px;top:430px;width:1091px;height:1px;background:#cfcfcf;"></div>
<div class="r" style="left:209px;top:431px;width:1091px;height:129px;background:#ebebfc;"></div>
<div class="r" style="left:209px;top:431px;width:1091px;height:24.5px;background:#fff;border-bottom:1px solid #d6d6d6;"></div>
<div class="r" style="left:224.2px;top:435px;width:1px;height:17px;background:#dedede;"></div>
<div class="r" style="left:358px;top:435px;width:1px;height:17px;background:#dedede;"></div>
<div class="r" style="left:689.5px;top:435px;width:1px;height:17px;background:#dedede;"></div>
<div class="r" style="left:853.5px;top:435px;width:1px;height:17px;background:#dedede;"></div>
<div class="r" style="left:906.7px;top:435px;width:1px;height:17px;background:#dedede;"></div>
<div class="r" style="left:977.4px;top:435px;width:1px;height:17px;background:#dedede;"></div>
<div class="r" style="left:1053.5px;top:435px;width:1px;height:17px;background:#dedede;"></div>
<div class="t" style="top:434.30px;font-size:13px;line-height:18px;color:#474747;left:214.60px;">P</div>
<div class="t" style="top:434.30px;font-size:13px;line-height:18px;color:#474747;letter-spacing:0.08px;left:231.50px;">20150728_cr_HCTH</div>
<div class="t" style="top:434.30px;font-size:13px;line-height:18px;color:#474747;letter-spacing:0.35px;left:323.70px;width:400px;text-align:center;">Protein Description</div>
<div class="t" style="top:434.30px;font-size:13px;line-height:18px;color:#474747;letter-spacing:0.38px;left:695.30px;">Protein Accession</div>
<div class="t" style="top:434.30px;font-size:13px;line-height:18px;color:#474747;letter-spacing:0.2px;left:864.00px;">S...</div>
<svg style="left:894px;top:440.5px" width="9" height="6"><path d="M1 1 L4.5 4.5 L8 1" stroke="#444" stroke-width="1.4" fill="none"/></svg>
<div class="t" style="top:434.30px;font-size:13px;line-height:18px;color:#474747;letter-spacing:0.35px;left:916.00px;">Matches</div>
<div class="t" style="top:434.30px;font-size:13px;line-height:18px;color:#474747;letter-spacing:0.35px;left:815.50px;width:400px;text-align:center;">Coverage</div>
<div class="t" style="top:434.30px;font-size:13px;line-height:18px;color:#474747;letter-spacing:0.35px;left:1000.80px;width:400px;text-align:center;">Mass</div>
<div class="cl" style="clip-path:inset(455.5px 66px 369px 209px)">
<div class="r" style="left:209px;top:456.4px;width:1091px;height:18.2px;background:#d8d8d8;"></div>
<div class="cl" style="clip-path:inset(455.5px 1142px 369px 209px)">
<div class="t" style="top:457.70px;font-size:13px;line-height:18px;color:#202020;left:213.50px;">Q</div>
</div>
<div class="t" style="top:460.70px;font-size:13px;line-height:18px;color:#202020;letter-spacing:0.3px;left:203.50px;width:150px;text-align:right;">646 308.156</div>
<div class="t" style="top:457.70px;font-size:13px;line-height:18px;color:#202020;letter-spacing:0.4px;left:362.80px;">Polyribonucleotide nucleotidyltransferase 1, mitoc...</div>
<div class="t" style="top:457.70px;font-size:13px;line-height:18px;color:#202020;letter-spacing:0.05px;left:695.30px;">&gt;sp|Q8TCS8|PNPT1_H...</div>
<div class="t" style="top:457.70px;font-size:13px;line-height:18px;color:#202020;left:916.80px;width:50px;text-align:center;">11</div>
<div class="t" style="top:457.70px;font-size:13px;line-height:18px;color:#202020;letter-spacing:0.1px;left:980.50px;width:70px;text-align:center;">17.10 %</div>
<div class="t" style="top:457.70px;font-size:13px;line-height:18px;color:#202020;left:1288.30px;">85</div>
<div class="cl" style="clip-path:inset(455.5px 1142px 369px 209px)">
<div class="t" style="top:476.55px;font-size:13px;line-height:18px;color:#202020;left:213.50px;">O</div>
</div>
<div class="t" style="top:479.55px;font-size:13px;line-height:18px;color:#202020;letter-spacing:0.3px;left:203.50px;width:150px;text-align:right;">1 033 109.679</div>
<div class="t" style="top:476.55px;font-size:13px;line-height:18px;color:#202020;letter-spacing:0.4px;left:362.80px;">Cell division cycle protein 123 homolog</div>
<div class="t" style="top:476.55px;font-size:13px;line-height:18px;color:#202020;letter-spacing:0.05px;left:695.30px;">&gt;sp|O75794|CD123_H...</div>
<div class="t" style="top:476.55px;font-size:13px;line-height:18px;color:#202020;left:916.80px;width:50px;text-align:center;">6</div>
<div class="t" style="top:476.55px;font-size:13px;line-height:18px;color:#202020;letter-spacing:0.1px;left:980.50px;width:70px;text-align:center;">22.90 %</div>
<div class="t" style="top:476.55px;font-size:13px;line-height:18px;color:#202020;left:1288.30px;">35</div>
<div class="cl" style="clip-path:inset(455.5px 1142px 369px 209px)">
<div class="t" style="top:495.40px;font-size:13px;line-height:18px;color:#202020;left:213.50px;">P</div>
</div>
<div class="t" style="top:498.40px;font-size:13px;line-height:18px;color:#202020;letter-spacing:0.3px;left:203.50px;width:150px;text-align:right;">27 173 547.435</div>
<div class="t" style="top:495.40px;font-size:13px;line-height:18px;color:#202020;letter-spacing:0.4px;left:362.80px;">Heterogeneous nuclear ribonucleoprotein K</div>
<div class="t" style="top:495.40px;font-size:13px;line-height:18px;color:#202020;letter-spacing:0.05px;left:695.30px;">&gt;sp|P61978-3|HNRPK_...</div>
<div class="t" style="top:495.40px;font-size:13px;line-height:18px;color:#202020;left:916.80px;width:50px;text-align:center;">19</div>
<div class="t" style="top:495.40px;font-size:13px;line-height:18px;color:#202020;letter-spacing:0.1px;left:980.50px;width:70px;text-align:center;">50.50 %</div>
<div class="t" style="top:495.40px;font-size:13px;line-height:18px;color:#202020;left:1288.30px;">48</div>
<div class="cl" style="clip-path:inset(455.5px 1142px 369px 209px)">
<div class="t" style="top:514.25px;font-size:13px;line-height:18px;color:#202020;left:213.50px;">O</div>
</div>
<div class="t" style="top:517.25px;font-size:13px;line-height:18px;color:#202020;letter-spacing:0.3px;left:203.50px;width:150px;text-align:right;">46 154.995</div>
<div class="t" style="top:514.25px;font-size:13px;line-height:18px;color:#202020;letter-spacing:0.4px;left:362.80px;">GTP-binding protein 1</div>
<div class="t" style="top:514.25px;font-size:13px;line-height:18px;color:#202020;letter-spacing:0.05px;left:695.30px;">&gt;sp|O00178|GTPB1_H...</div>
<div class="t" style="top:514.25px;font-size:13px;line-height:18px;color:#202020;left:916.80px;width:50px;text-align:center;">2</div>
<div class="t" style="top:514.25px;font-size:13px;line-height:18px;color:#202020;letter-spacing:0.1px;left:980.50px;width:70px;text-align:center;">3.30 %</div>
<div class="t" style="top:514.25px;font-size:13px;line-height:18px;color:#202020;left:1288.30px;">72</div>
<div class="cl" style="clip-path:inset(455.5px 1142px 369px 209px)">
<div class="t" style="top:533.10px;font-size:13px;line-height:18px;color:#202020;left:213.50px;">P</div>
</div>
<div class="t" style="top:536.10px;font-size:13px;line-height:18px;color:#202020;letter-spacing:0.3px;left:203.50px;width:150px;text-align:right;">984 292.493</div>
<div class="t" style="top:533.10px;font-size:13px;line-height:18px;color:#202020;letter-spacing:0.4px;left:362.80px;">Creatine kinase U-type, mitochondrial</div>
<div class="t" style="top:533.10px;font-size:13px;line-height:18px;color:#202020;letter-spacing:0.05px;left:695.30px;">&gt;sp|P12532|KCRU_HU...</div>
<div class="t" style="top:533.10px;font-size:13px;line-height:18px;color:#202020;left:916.80px;width:50px;text-align:center;">5</div>
<div class="t" style="top:533.10px;font-size:13px;line-height:18px;color:#202020;letter-spacing:0.1px;left:980.50px;width:70px;text-align:center;">19.20 %</div>
<div class="t" style="top:533.10px;font-size:13px;line-height:18px;color:#202020;left:1288.30px;">47</div>
<div class="cl" style="clip-path:inset(455.5px 1142px 369px 209px)">
<div class="t" style="top:551.95px;font-size:13px;line-height:18px;color:#202020;left:213.50px;">P</div>
</div>
<div class="t" style="top:554.95px;font-size:13px;line-height:18px;color:#202020;letter-spacing:0.3px;left:203.50px;width:150px;text-align:right;">1 226 441.094</div>
<div class="t" style="top:551.95px;font-size:13px;line-height:18px;color:#202020;letter-spacing:0.4px;left:362.80px;">Cytochrome c oxidase subunit 2</div>
<div class="t" style="top:551.95px;font-size:13px;line-height:18px;color:#202020;letter-spacing:0.05px;left:695.30px;">&gt;sp|P00414|COX2_HU...</div>
<div class="t" style="top:551.95px;font-size:13px;line-height:18px;color:#202020;left:916.80px;width:50px;text-align:center;">8</div>
<div class="t" style="top:551.95px;font-size:13px;line-height:18px;color:#202020;letter-spacing:0.1px;left:980.50px;width:70px;text-align:center;">9.30 %</div>
<div class="t" style="top:551.95px;font-size:13px;line-height:18px;color:#202020;left:1288.30px;">26</div>
</div>
<div class="r" style="left:1256.7px;top:455px;width:44px;height:34px;background:transparent;"></div>
<svg style="left:1254.2px;top:459px" width="44" height="32" viewBox="-23 0 44 32"><rect x="0" y="0" width="17.2" height="11.6" rx="1.6" fill="#4a8ce6"/><rect x="4.5" y="2.9" width="8.4" height="5.8" rx="2.2" fill="#eef0fc"/><g transform="translate(-21.3 0)"><path d="M13.9 17.6 A5.8 5.8 0 0 0 4.0 18.8" stroke="#3f95e8" stroke-width="3.3" fill="none"/><path d="M0.4 21.0 L6.4 17.6 L4.8 24.6 Z" fill="#3f95e8"/><path d="M6.2 26.0 A5.8 5.8 0 0 0 15.0 23.2" stroke="#ea4e12" stroke-width="3.3" fill="none"/><path d="M18.6 21.8 L15.4 18.6 L12.8 24.2 Z" fill="#ea4e12"/><path d="M2.2 14.6 L16.7 28.4 M16.3 14.6 L2.2 28.4" stroke="#f6b23c" stroke-width="2" stroke-linecap="round" opacity="0.92"/></g><g transform="translate(0 0)"><path d="M13.9 17.6 A5.8 5.8 0 0 0 4.0 18.8" stroke="#3f95e8" stroke-width="3.3" fill="none"/><path d="M0.4 21.0 L6.4 17.6 L4.8 24.6 Z" fill="#3f95e8"/><path d="M6.2 26.0 A5.8 5.8 0 0 0 15.0 23.2" stroke="#ea4e12" stroke-width="3.3" fill="none"/><path d="M18.6 21.8 L15.4 18.6 L12.8 24.2 Z" fill="#ea4e12"/></g></svg>
<div class="r" style="left:209px;top:559px;width:1091px;height:1px;background:#d2d2d2;"></div>
<div class="r" style="left:209px;top:560px;width:1091px;height:217.6px;background:#ebebfc;"></div>
<div class="r" style="left:209px;top:560px;width:1091px;height:25.5px;background:#fff;border-bottom:1px solid #d6d6d6;"></div>
<div class="r" style="left:225px;top:564px;width:1px;height:17px;background:#dedede;"></div>
<div class="r" style="left:358.1px;top:564px;width:1px;height:17px;background:#dedede;"></div>
<div class="r" style="left:397.7px;top:564px;width:1px;height:17px;background:#dedede;"></div>
<div class="r" style="left:545.3px;top:564px;width:1px;height:17px;background:#dedede;"></div>
<div class="r" style="left:692.4px;top:564px;width:1px;height:17px;background:#dedede;"></div>
<div class="r" style="left:745.8px;top:564px;width:1px;height:17px;background:#dedede;"></div>
<div class="r" style="left:834.3px;top:564px;width:1px;height:17px;background:#dedede;"></div>
<div class="r" style="left:897.3px;top:564px;width:1px;height:17px;background:#dedede;"></div>
<div class="r" style="left:1039.9px;top:564px;width:1px;height:17px;background:#dedede;"></div>
<div class="r" style="left:1168px;top:564px;width:1px;height:17px;background:#dedede;"></div>
<div class="cl" style="clip-path:inset(560px 1145px 342px 209px)">
<div class="t" style="top:564.20px;font-size:13px;line-height:18px;color:#474747;left:215.50px;">F</div>
</div>
<div class="t" style="top:564.20px;font-size:13px;line-height:18px;color:#474747;letter-spacing:0.08px;left:231.10px;">20150728_cr_HCTH</div>
<div class="t" style="top:564.20px;font-size:13px;line-height:18px;color:#474747;letter-spacing:0.3px;left:367.40px;">m/z</div>
<div class="t" style="top:564.20px;font-size:13px;line-height:18px;color:#474747;letter-spacing:0.42px;left:408.20px;">Retention Time [min]</div>
<div class="t" style="top:564.20px;font-size:13px;line-height:18px;color:#474747;letter-spacing:0.4px;left:555.30px;">Variable Modification</div>
<div class="t" style="top:564.20px;font-size:13px;line-height:18px;color:#474747;letter-spacing:0.35px;left:701.90px;">Score</div>
<div class="t" style="top:564.20px;font-size:13px;line-height:18px;color:#474747;letter-spacing:0.4px;left:755.00px;">Delta Score</div>
<div class="t" style="top:564.20px;font-size:13px;line-height:18px;color:#474747;letter-spacing:0.4px;left:844.00px;">Charge</div>
<div class="t" style="top:564.20px;font-size:13px;line-height:18px;color:#474747;letter-spacing:0.3px;left:906.80px;">Mass Deviation (Da)</div>
<div class="t" style="top:564.20px;font-size:13px;line-height:18px;color:#474747;letter-spacing:0.4px;left:1049.30px;">Expectation Value</div>
<div class="t" style="top:564.20px;font-size:13px;line-height:18px;color:#474747;letter-spacing:0.42px;left:1177.50px;">Homology Thresh.</div>
<div class="r" style="left:209px;top:680.6px;width:1091px;height:17.8px;background:#d8d8d8;"></div>
<div class="cl" style="clip-path:inset(586px 1146.5px 151px 209px)">
<div class="t" style="top:586.90px;font-size:13px;line-height:18px;color:#2626f6;left:214.80px;">E</div>
</div>
<div class="t" style="top:586.90px;font-size:13px;line-height:18px;color:#2626f6;letter-spacing:0.35px;left:203.00px;width:150px;text-align:right;word-spacing:0.3px;">1 446 244.0</div>
<div class="t" style="top:586.90px;font-size:13px;line-height:18px;color:#202020;left:366.00px;">51...</div>
<div class="t" style="top:586.90px;font-size:13px;line-height:18px;color:#202020;letter-spacing:0.3px;left:430.60px;width:80px;text-align:center;">38.118</div>
<div class="t" style="top:586.90px;font-size:13px;line-height:18px;color:#202020;letter-spacing:0.45px;left:568.30px;width:100px;text-align:center;">Unmodified</div>
<div class="t" style="top:586.90px;font-size:13px;line-height:18px;color:#202020;letter-spacing:0.3px;left:688.60px;width:60px;text-align:center;">50.35</div>
<div class="t" style="top:586.90px;font-size:13px;line-height:18px;color:#202020;letter-spacing:0.3px;left:760.00px;width:60px;text-align:center;">23.97</div>
<div class="t" style="top:586.90px;font-size:13px;line-height:18px;color:#202020;left:850.20px;width:30px;text-align:center;">2</div>
<div class="t" style="top:586.90px;font-size:13px;line-height:18px;color:#202020;letter-spacing:0.4px;left:928.50px;width:80px;text-align:center;">-0.0375</div>
<div class="cl" style="clip-path:inset(586px 1146.5px 151px 209px)">
<div class="t" style="top:605.80px;font-size:13px;line-height:18px;color:#2626f6;left:214.80px;">E</div>
</div>
<div class="t" style="top:605.80px;font-size:13px;line-height:18px;color:#2626f6;letter-spacing:0.35px;left:203.00px;width:150px;text-align:right;word-spacing:0.3px;">2 515 088.0</div>
<div class="t" style="top:605.80px;font-size:13px;line-height:18px;color:#202020;left:366.00px;">80...</div>
<div class="t" style="top:605.80px;font-size:13px;line-height:18px;color:#202020;letter-spacing:0.3px;left:430.60px;width:80px;text-align:center;">159.788</div>
<div class="t" style="top:605.80px;font-size:13px;line-height:18px;color:#202020;letter-spacing:0.45px;left:568.30px;width:100px;text-align:center;">Unmodified</div>
<div class="t" style="top:605.80px;font-size:13px;line-height:18px;color:#202020;letter-spacing:0.3px;left:688.60px;width:60px;text-align:center;">64.52</div>
<div class="t" style="top:605.80px;font-size:13px;line-height:18px;color:#202020;letter-spacing:0.3px;left:760.00px;width:60px;text-align:center;">54.72</div>
<div class="t" style="top:605.80px;font-size:13px;line-height:18px;color:#202020;left:850.20px;width:30px;text-align:center;">2</div>
<div class="t" style="top:605.80px;font-size:13px;line-height:18px;color:#202020;letter-spacing:0.4px;left:928.50px;width:80px;text-align:center;">-0.0377</div>
<div class="cl" style="clip-path:inset(586px 1146.5px 151px 209px)">
<div class="t" style="top:624.70px;font-size:13px;line-height:18px;color:#2626f6;left:214.80px;">E</div>
</div>
<div class="t" style="top:624.70px;font-size:13px;line-height:18px;color:#2626f6;letter-spacing:0.35px;left:203.00px;width:150px;text-align:right;word-spacing:0.3px;">1 630 046.0</div>
<div class="t" style="top:624.70px;font-size:13px;line-height:18px;color:#202020;left:366.00px;">80...</div>
<div class="t" style="top:624.70px;font-size:13px;line-height:18px;color:#202020;letter-spacing:0.3px;left:430.60px;width:80px;text-align:center;">140.183</div>
<div class="t" style="top:624.70px;font-size:13px;line-height:18px;color:#202020;letter-spacing:0.45px;left:568.30px;width:100px;text-align:center;">Unmodified</div>
<div class="t" style="top:624.70px;font-size:13px;line-height:18px;color:#202020;letter-spacing:0.3px;left:688.60px;width:60px;text-align:center;">28.63</div>
<div class="t" style="top:624.70px;font-size:13px;line-height:18px;color:#202020;letter-spacing:0.3px;left:760.00px;width:60px;text-align:center;">18.2</div>
<div class="t" style="top:624.70px;font-size:13px;line-height:18px;color:#202020;left:850.20px;width:30px;text-align:center;">2</div>
<div class="t" style="top:624.70px;font-size:13px;line-height:18px;color:#202020;letter-spacing:0.4px;left:928.50px;width:80px;text-align:center;">-0.0454</div>
<div class="cl" style="clip-path:inset(586px 1146.5px 151px 209px)">
<div class="t" style="top:643.60px;font-size:13px;line-height:18px;color:#2626f6;left:214.80px;">F</div>
</div>
<div class="t" style="top:643.60px;font-size:13px;line-height:18px;color:#2626f6;letter-spacing:0.35px;left:203.00px;width:150px;text-align:right;word-spacing:0.3px;">8 884 086.0</div>
<div class="t" style="top:643.60px;font-size:13px;line-height:18px;color:#202020;left:366.00px;">53...</div>
<div class="t" style="top:643.60px;font-size:13px;line-height:18px;color:#202020;letter-spacing:0.3px;left:430.60px;width:80px;text-align:center;">104.333</div>
<div class="t" style="top:643.60px;font-size:13px;line-height:18px;color:#202020;letter-spacing:0.45px;left:568.30px;width:100px;text-align:center;">Unmodified</div>
<div class="t" style="top:643.60px;font-size:13px;line-height:18px;color:#202020;letter-spacing:0.3px;left:688.60px;width:60px;text-align:center;">40.99</div>
<div class="t" style="top:643.60px;font-size:13px;line-height:18px;color:#202020;letter-spacing:0.3px;left:760.00px;width:60px;text-align:center;">23.17</div>
<div class="t" style="top:643.60px;font-size:13px;line-height:18px;color:#202020;left:850.20px;width:30px;text-align:center;">2</div>
<div class="t" style="top:643.60px;font-size:13px;line-height:18px;color:#202020;letter-spacing:0.4px;left:928.50px;width:80px;text-align:center;">-0.0646</div>
<div class="cl" style="clip-path:inset(586px 1146.5px 151px 209px)">
<div class="t" style="top:662.50px;font-size:13px;line-height:18px;color:#2626f6;left:214.80px;">I</div>
</div>
<div class="t" style="top:662.50px;font-size:13px;line-height:18px;color:#2626f6;letter-spacing:0.35px;left:203.00px;width:150px;text-align:right;word-spacing:0.3px;">2 740 475.0</div>
<div class="t" style="top:662.50px;font-size:13px;line-height:18px;color:#202020;left:366.00px;">77...</div>
<div class="t" style="top:662.50px;font-size:13px;line-height:18px;color:#202020;letter-spacing:0.3px;left:430.60px;width:80px;text-align:center;">169.905</div>
<div class="t" style="top:662.50px;font-size:13px;line-height:18px;color:#202020;letter-spacing:0.45px;left:568.30px;width:100px;text-align:center;">Unmodified</div>
<div class="t" style="top:662.50px;font-size:13px;line-height:18px;color:#202020;letter-spacing:0.3px;left:688.60px;width:60px;text-align:center;">46.89</div>
<div class="t" style="top:662.50px;font-size:13px;line-height:18px;color:#202020;letter-spacing:0.3px;left:760.00px;width:60px;text-align:center;">33.15</div>
<div class="t" style="top:662.50px;font-size:13px;line-height:18px;color:#202020;left:850.20px;width:30px;text-align:center;">2</div>
<div class="t" style="top:662.50px;font-size:13px;line-height:18px;color:#202020;letter-spacing:0.4px;left:928.50px;width:80px;text-align:center;">-0.0540</div>
<div class="cl" style="clip-path:inset(586px 1146.5px 151px 209px)">
<div class="t" style="top:681.40px;font-size:13px;line-height:18px;color:#2626f6;left:214.80px;">L</div>
</div>
<div class="t" style="top:681.40px;font-size:13px;line-height:18px;color:#2626f6;letter-spacing:0.35px;left:203.00px;width:150px;text-align:right;word-spacing:0.3px;">14 955 081.0</div>
<div class="t" style="top:681.40px;font-size:13px;line-height:18px;color:#202020;left:366.00px;">56...</div>
<div class="t" style="top:681.40px;font-size:13px;line-height:18px;color:#202020;letter-spacing:0.3px;left:430.60px;width:80px;text-align:center;">130.326</div>
<div class="t" style="top:681.40px;font-size:13px;line-height:18px;color:#202020;letter-spacing:0.45px;left:568.30px;width:100px;text-align:center;">Unmodified</div>
<div class="t" style="top:681.40px;font-size:13px;line-height:18px;color:#202020;letter-spacing:0.3px;left:688.60px;width:60px;text-align:center;">57.53</div>
<div class="t" style="top:681.40px;font-size:13px;line-height:18px;color:#202020;letter-spacing:0.3px;left:760.00px;width:60px;text-align:center;">31.97</div>
<div class="t" style="top:681.40px;font-size:13px;line-height:18px;color:#202020;left:850.20px;width:30px;text-align:center;">2</div>
<div class="t" style="top:681.40px;font-size:13px;line-height:18px;color:#202020;letter-spacing:0.4px;left:928.50px;width:80px;text-align:center;">-0.0366</div>
<div class="cl" style="clip-path:inset(586px 1146.5px 151px 209px)">
<div class="t" style="top:700.30px;font-size:13px;line-height:18px;color:#2626f6;left:214.80px;">N</div>
</div>
<div class="t" style="top:700.30px;font-size:13px;line-height:18px;color:#2626f6;letter-spacing:0.35px;left:203.00px;width:150px;text-align:right;word-spacing:0.3px;">8 014 487.0</div>
<div class="t" style="top:700.30px;font-size:13px;line-height:18px;color:#202020;left:366.00px;">61...</div>
<div class="t" style="top:700.30px;font-size:13px;line-height:18px;color:#202020;letter-spacing:0.3px;left:430.60px;width:80px;text-align:center;">119.090</div>
<div class="t" style="top:700.30px;font-size:13px;line-height:18px;color:#202020;letter-spacing:0.45px;left:568.30px;width:100px;text-align:center;">Unmodified</div>
<div class="t" style="top:700.30px;font-size:13px;line-height:18px;color:#202020;letter-spacing:0.3px;left:688.60px;width:60px;text-align:center;">46.35</div>
<div class="t" style="top:700.30px;font-size:13px;line-height:18px;color:#202020;letter-spacing:0.3px;left:760.00px;width:60px;text-align:center;">37.39</div>
<div class="t" style="top:700.30px;font-size:13px;line-height:18px;color:#202020;left:850.20px;width:30px;text-align:center;">2</div>
<div class="t" style="top:700.30px;font-size:13px;line-height:18px;color:#202020;letter-spacing:0.4px;left:928.50px;width:80px;text-align:center;">-0.0358</div>
<div class="cl" style="clip-path:inset(586px 1146.5px 151px 209px)">
<div class="t" style="top:719.20px;font-size:13px;line-height:18px;color:#2626f6;left:214.80px;">S</div>
</div>
<div class="t" style="top:719.20px;font-size:13px;line-height:18px;color:#2626f6;letter-spacing:0.35px;left:203.00px;width:150px;text-align:right;word-spacing:0.3px;">4 112 476.0</div>
<div class="t" style="top:719.20px;font-size:13px;line-height:18px;color:#202020;left:366.00px;">63...</div>
<div class="t" style="top:719.20px;font-size:13px;line-height:18px;color:#202020;letter-spacing:0.3px;left:430.60px;width:80px;text-align:center;">131.365</div>
<div class="t" style="top:719.20px;font-size:13px;line-height:18px;color:#202020;letter-spacing:0.45px;left:568.30px;width:100px;text-align:center;">Unmodified</div>
<div class="t" style="top:719.20px;font-size:13px;line-height:18px;color:#202020;letter-spacing:0.3px;left:688.60px;width:60px;text-align:center;">38.3</div>
<div class="t" style="top:719.20px;font-size:13px;line-height:18px;color:#202020;letter-spacing:0.3px;left:760.00px;width:60px;text-align:center;">33.65</div>
<div class="t" style="top:719.20px;font-size:13px;line-height:18px;color:#202020;left:850.20px;width:30px;text-align:center;">2</div>
<div class="t" style="top:719.20px;font-size:13px;line-height:18px;color:#202020;letter-spacing:0.4px;left:928.50px;width:80px;text-align:center;">-0.0391</div>
<div class="cl" style="clip-path:inset(586px 1146.5px 151px 209px)">
<div class="t" style="top:738.10px;font-size:13px;line-height:18px;color:#2626f6;left:214.80px;">S</div>
</div>
<div class="t" style="top:738.10px;font-size:13px;line-height:18px;color:#2626f6;letter-spacing:0.35px;left:203.00px;width:150px;text-align:right;word-spacing:0.3px;">2 946 003.0</div>
<div class="t" style="top:738.10px;font-size:13px;line-height:18px;color:#202020;left:366.00px;">38...</div>
<div class="t" style="top:738.10px;font-size:13px;line-height:18px;color:#202020;letter-spacing:0.3px;left:430.60px;width:80px;text-align:center;">63.973</div>
<div class="t" style="top:738.10px;font-size:13px;line-height:18px;color:#202020;letter-spacing:0.45px;left:568.30px;width:100px;text-align:center;">Unmodified</div>
<div class="t" style="top:738.10px;font-size:13px;line-height:18px;color:#202020;letter-spacing:0.3px;left:688.60px;width:60px;text-align:center;">35.27</div>
<div class="t" style="top:738.10px;font-size:13px;line-height:18px;color:#202020;letter-spacing:0.3px;left:760.00px;width:60px;text-align:center;">23.56</div>
<div class="t" style="top:738.10px;font-size:13px;line-height:18px;color:#202020;left:850.20px;width:30px;text-align:center;">3</div>
<div class="t" style="top:738.10px;font-size:13px;line-height:18px;color:#202020;letter-spacing:0.4px;left:928.50px;width:80px;text-align:center;">-0.1097</div>
<div class="cl" style="clip-path:inset(586px 1146.5px 151px 209px)">
<div class="t" style="top:757.00px;font-size:13px;line-height:18px;color:#2626f6;left:214.80px;">S</div>
</div>
<div class="t" style="top:757.00px;font-size:13px;line-height:18px;color:#2626f6;letter-spacing:0.35px;left:203.00px;width:150px;text-align:right;word-spacing:0.3px;">1 997 008.0</div>
<div class="t" style="top:757.00px;font-size:13px;line-height:18px;color:#202020;left:366.00px;">8...</div>
<div class="t" style="top:757.00px;font-size:13px;line-height:18px;color:#202020;letter-spacing:0.3px;left:430.60px;width:80px;text-align:center;">126.494</div>
<div class="t" style="top:757.00px;font-size:13px;line-height:18px;color:#202020;letter-spacing:0.45px;left:568.30px;width:100px;text-align:center;">Unmodified</div>
<div class="t" style="top:757.00px;font-size:13px;line-height:18px;color:#202020;letter-spacing:0.3px;left:688.60px;width:60px;text-align:center;">32.75</div>
<div class="t" style="top:757.00px;font-size:13px;line-height:18px;color:#202020;letter-spacing:0.3px;left:760.00px;width:60px;text-align:center;">28.44</div>
<div class="t" style="top:757.00px;font-size:13px;line-height:18px;color:#202020;left:850.20px;width:30px;text-align:center;">2</div>
<div class="t" style="top:757.00px;font-size:13px;line-height:18px;color:#202020;letter-spacing:0.4px;left:928.50px;width:80px;text-align:center;">0.0199</div>
<div class="r" style="left:209px;top:777.2px;width:1091px;height:18.5px;background:#d6d6f8;"></div>
<div class="t" style="top:777.00px;font-size:13px;line-height:18px;color:#1e1e1e;font-weight:700;letter-spacing:0.2px;left:212.30px;">Database Search:</div>
<div class="t" style="top:777.00px;font-size:13px;line-height:18px;color:#1e1e1e;letter-spacing:0.34px;left:331.30px;-webkit-text-stroke:0.5px #1e1e1e;">20150728_cr_HCTH</div>
<div class="t" style="top:777.00px;font-size:13px;line-height:18px;color:#1e1e1e;font-weight:700;letter-spacing:0.5px;left:859.00px;">(3713 proteins, 20045 peptides)</div>
<div class="r" style="left:1252.5px;top:778px;width:46px;height:17px;background:#f6f6f6;border:1px solid #bdbdbd;border-radius:1px"></div>
<div class="t" style="top:780.06px;font-size:10.5px;line-height:15px;color:#3a3a3a;letter-spacing:0.3px;left:1252.50px;width:46px;text-align:center;">URL</div>
<div class="r" style="left:209px;top:795.4px;width:1091px;height:16.6px;background:#ececec;"></div>
<div class="r" style="left:211px;top:801.8px;width:1086px;height:3px;background:#bebebe;border-radius:1.5px"></div>
<div class="r" style="left:211px;top:801.8px;width:820px;height:3px;background:#2f8cf0;border-radius:1.5px"></div>
<div class="r" style="left:1024.5px;top:797.5px;width:13px;height:13px;background:#fff;border:0.5px solid #b0b0b0;border-radius:50%;box-shadow:0 0.5px 1px rgba(0,0,0,0.25)"></div>
</body></html>
